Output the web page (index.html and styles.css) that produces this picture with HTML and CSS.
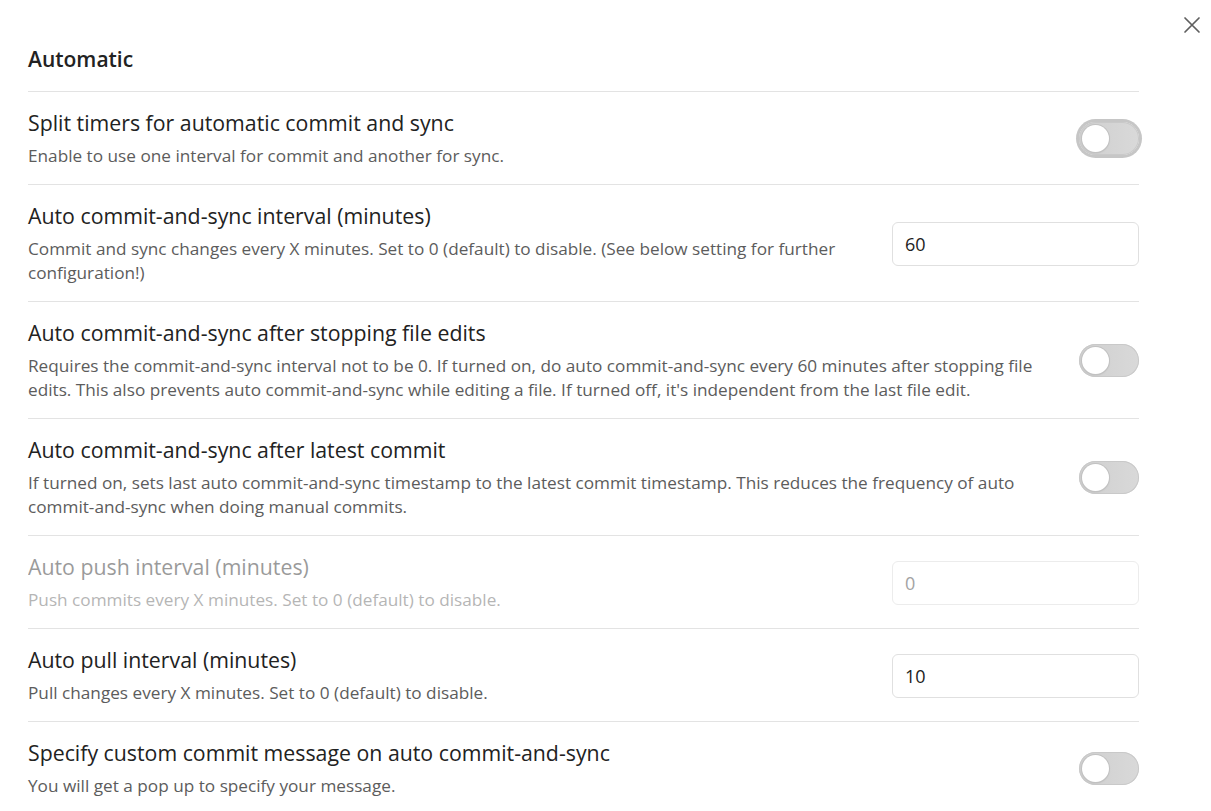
FILE: index.html
```html
<!DOCTYPE html>
<html lang="en">
<head>
<meta charset="utf-8">
<title>Automatic settings</title>
<link rel="stylesheet" href="styles.css">
</head>
<body>
<div class="modal">
  <button class="close" aria-label="Close">
    <svg width="18" height="18" viewBox="0 0 18 18"><path d="M2 2L16 16M16 2L2 16" stroke="#5f5f5f" stroke-width="1.7" stroke-linecap="round" fill="none"/></svg>
  </button>
  <div class="content">
    <div class="heading">Automatic</div>

    <div class="item">
      <div class="info">
        <div class="name">Split timers for automatic commit and sync</div>
        <div class="desc">Enable to use one interval for commit and another for sync.</div>
      </div>
      <div class="control"><div class="toggle focused"></div></div>
    </div>

    <div class="item">
      <div class="info">
        <div class="name">Auto commit-and-sync interval (minutes)</div>
        <div class="desc">Commit and sync changes every X minutes. Set to 0 (default) to disable. (See below setting for further configuration!)</div>
      </div>
      <div class="control"><input class="text" type="text" value="60"></div>
    </div>

    <div class="item">
      <div class="info">
        <div class="name">Auto commit-and-sync after stopping file edits</div>
        <div class="desc">Requires the commit-and-sync interval not to be 0. If turned on, do auto commit-and-sync every 60 minutes after stopping file edits. This also prevents auto commit-and-sync while editing a file. If turned off, it's independent from the last file edit.</div>
      </div>
      <div class="control"><div class="toggle"></div></div>
    </div>

    <div class="item">
      <div class="info">
        <div class="name">Auto commit-and-sync after latest commit</div>
        <div class="desc">If turned on, sets last auto commit-and-sync timestamp to the latest commit timestamp. This reduces the frequency of auto commit-and-sync when doing manual commits.</div>
      </div>
      <div class="control"><div class="toggle"></div></div>
    </div>

    <div class="item disabled">
      <div class="info">
        <div class="name">Auto push interval (minutes)</div>
        <div class="desc">Push commits every X minutes. Set to 0 (default) to disable.</div>
      </div>
      <div class="control"><input class="text" type="text" value="0" disabled></div>
    </div>

    <div class="item">
      <div class="info">
        <div class="name">Auto pull interval (minutes)</div>
        <div class="desc">Pull changes every X minutes. Set to 0 (default) to disable.</div>
      </div>
      <div class="control"><input class="text" type="text" value="10"></div>
    </div>

    <div class="item">
      <div class="info">
        <div class="name">Specify custom commit message on auto commit-and-sync</div>
        <div class="desc">You will get a pop up to specify your message.</div>
      </div>
      <div class="control"><div class="toggle"></div></div>
    </div>
  </div>
</div>
</body>
</html>
```

FILE: styles.css
```css
html, body {
  margin: 0;
  padding: 0;
  background: #ffffff;
}

body {
  font-family: "Open Sans", "Noto Sans", sans-serif;
  color: #222222;
}

.modal {
  position: relative;
  width: 1211px;
}

.close {
  position: absolute;
  top: 16px;
  left: 1183px;
  width: 18px;
  height: 18px;
  padding: 0;
  border: none;
  background: transparent;
  display: flex;
}

.content {
  width: 1111px;
  padding: 45px 0 0 28px;
}

.heading {
  font-size: 21px;
  font-weight: 600;
  line-height: 28px;
  padding-bottom: 18px;
  color: #222222;
}

.item {
  display: flex;
  align-items: center;
  gap: 20px;
  padding: 17px 0 16px;
  border-top: 1px solid #e3e3e3;
}

.info {
  flex: 1 1 auto;
  min-width: 0;
}

.name {
  font-size: 21.3px;
  line-height: 28px;
  color: #222222;
}

.desc {
  margin-top: 7px;
  font-size: 17.2px;
  line-height: 24px;
  color: #5c5c5c;
}

.disabled .info {
  opacity: 0.45;
}

.control {
  flex: 0 0 auto;
  display: flex;
  justify-content: flex-end;
  align-items: center;
}

.toggle {
  position: relative;
  width: 60px;
  height: 33px;
  border-radius: 17px;
  background: linear-gradient(90deg, #cfcfcf, #d9d9d9);
  box-shadow: inset 0 0 0 1px #c9c9c9;
}

.toggle::before {
  content: "";
  position: absolute;
  left: 3px;
  top: 3px;
  width: 27px;
  height: 27px;
  border-radius: 50%;
  background: #ffffff;
  box-shadow: 0 0 0 1px #c2c2c2, 0 1px 2px rgba(0, 0, 0, 0.15);
}

.toggle.focused {
  box-shadow: inset 0 0 0 1px #c9c9c9, 0 0 0 3px #c6c6c6;
}

.text {
  box-sizing: border-box;
  width: 247px;
  height: 44px;
  padding: 0 12px;
  border: 1px solid #e0e0e0;
  border-radius: 6px;
  background: #ffffff;
  font-family: "Open Sans", "Noto Sans", sans-serif;
  font-size: 18px;
  color: #222222;
  outline: none;
}

.text:disabled {
  border-color: #ececec;
  color: #a3a3a3;
}
```
